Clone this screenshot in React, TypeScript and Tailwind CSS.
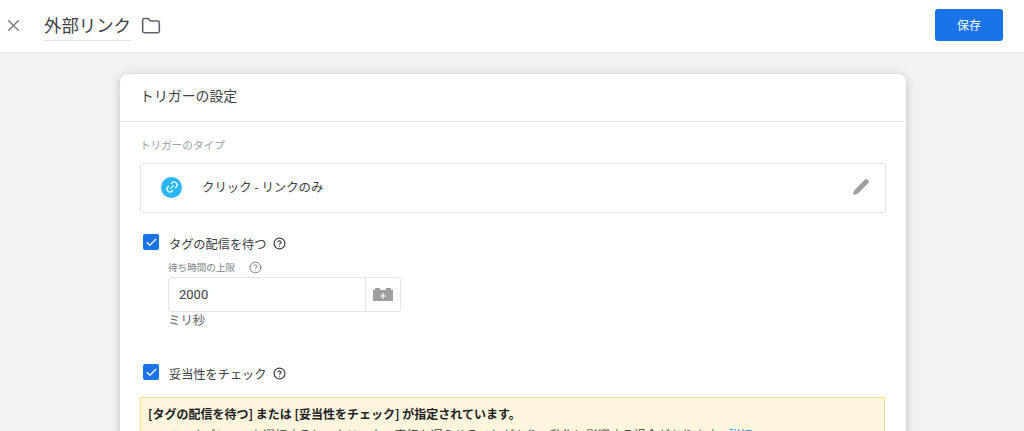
import { X, Folder, Pencil, Link2, Check, CircleHelp } from "lucide-react";

const font = { fontFamily: '"Noto Sans CJK JP", Roboto, sans-serif' };

function CheckRow({ label }: { label: string }) {
  return (
    <div className="flex items-center h-4 ml-[3px]">
      <span className="w-4 h-4 rounded-[2px] bg-[#1a73e8] flex items-center justify-center">
        <Check className="w-[13px] h-[13px] text-white" strokeWidth={2.4} />
      </span>
      <span className="ml-[10px] text-[12.2px] leading-[20px] mt-[3px] text-[#3c4043]">{label}</span>
      <CircleHelp className="ml-[6px] mt-[3px] w-[13px] h-[13px] text-[#3c4043]" strokeWidth={2.2} />
    </div>
  );
}

export default function App() {
  return (
    <div className="h-[431px] overflow-hidden bg-[#f1f2f4] flex flex-col" style={font}>
      {/* Header */}
      <div className="h-[53px] shrink-0 bg-white border-b border-[#e8e9eb] flex items-center pl-[4px] pr-[21px]">
        <X className="w-[19px] h-[19px] text-[#757575] -mt-[1px]" strokeWidth={1.6} />
        <div className="ml-[21px] h-[29px] border-b border-[#e0e0e0] text-[17.4px] leading-[26px] text-[#3c4043]">
          外部リンク
        </div>
        <Folder className="ml-[10px] w-[20px] h-[20px] text-[#5f6368]" strokeWidth={1.9} />
        <button className="ml-auto w-[68px] h-[32px] rounded-[3px] bg-[#1a73e8] text-white text-[12px] -mt-[2px]">
          保存
        </button>
      </div>

      {/* Card */}
      <div className="mt-[21px] ml-[120px] w-[786px] bg-white rounded-t-[8px] shadow-[0_2px_10px_rgba(0,0,0,0.22)] flex-1">
        <div className="h-[48px] border-b border-[#e8e9eb] pl-[20px] pb-[5px] flex items-center text-[13.9px] text-[#3c4043]">
          トリガーの設定
        </div>
        <div className="px-[20px]">
          <div className="mt-[16px] h-[14px] flex items-center text-[10.6px] text-[#9aa0a6]">トリガーのタイプ</div>
          <div className="mt-[11px] w-[746px] h-[50px] border border-[#e3e4e6] rounded-[3px] flex items-center pl-[20px] pr-[15px] pb-[2px]">
            <span className="w-[21px] h-[21px] rounded-full bg-[#29b6f6] flex items-center justify-center">
              <Link2 className="w-[14px] h-[14px] text-white -rotate-45" strokeWidth={2} />
            </span>
            <span className="ml-[20px] text-[12.4px] text-[#3c4043]">クリック - リンクのみ</span>
            <Pencil className="ml-auto w-[18px] h-[18px] text-[#9e9e9e] fill-[#9e9e9e]" strokeWidth={1} />
          </div>

          <div className="mt-[21px]">
            <CheckRow label="タグの配信を待つ" />
          </div>
          <div className="ml-[28px]">
            <div className="mt-[10px] h-[14px] flex items-center text-[9.6px] text-[#80868b]">
              待ち時間の上限
              <CircleHelp className="ml-[14px] w-[13px] h-[13px] text-[#757575]" strokeWidth={1.7} />
            </div>
            <div className="mt-[3px] w-[233px] h-[35px] border border-[#e3e4e6] rounded-[3px] flex">
              <div className="flex-1 pl-[10px] flex items-center text-[13px] text-[#3c4043]" style={{ fontFamily: "Roboto, sans-serif" }}>
                2000
              </div>
              <div className="w-[35px] border-l border-[#e3e4e6] flex items-center justify-center">
                <svg width="20" height="13" viewBox="0 0 20 13">
                  <path d="M0 2h2V0h5v2h6V0h5v2h2v11H0z" fill="#9e9e9e" />
                  <path d="M10 5v6M7 8h6" stroke="#fff" strokeWidth="1.2" />
                </svg>
              </div>
            </div>
            <div className="mt-[-1px] h-[18px] leading-[18px] text-[12.4px] text-[#5f6368]">ミリ秒</div>
          </div>

          <div className="mt-[35px]">
            <CheckRow label="妥当性をチェック" />
          </div>

          <div className="mt-[17px] w-[745px] h-[60px] bg-[#fdf6dd] border border-[#fde293] px-[7px] text-[12px] text-[#202124]">
            <div className="mt-[8px] font-bold leading-[16px]">[タグの配信を待つ] または [妥当性をチェック] が指定されています。</div>
            <div className="mt-[5px] pl-[19px] leading-[16px] text-[#3c4043] whitespace-nowrap">
              このオプションを選択すると、クリックの実行を遅らせることがあり、動作に影響する場合があります。<span className="text-[#1a73e8]">詳細</span>
            </div>
          </div>
        </div>
      </div>
    </div>
  );
}
